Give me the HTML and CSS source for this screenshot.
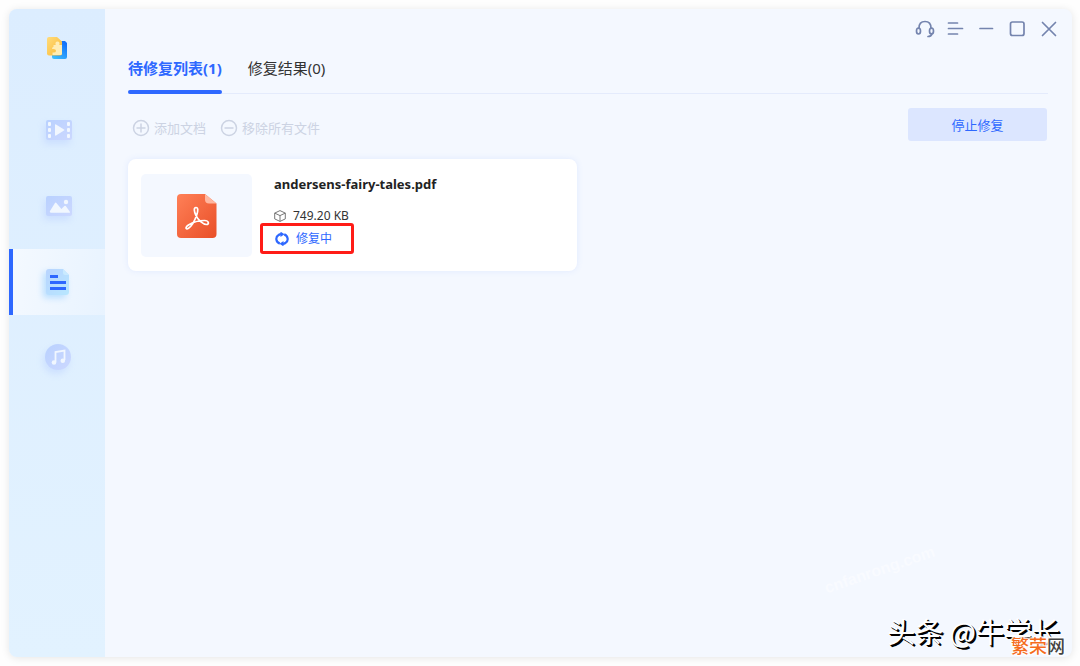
FILE: index.html
```html
<!DOCTYPE html>
<html lang="zh-CN">
<head>
<meta charset="utf-8">
<meta name="viewport" content="width=device-width, initial-scale=1">
<title>待修复列表</title>
<link rel="stylesheet" href="styles.css">
</head>
<body>
<div class="window">
  <nav class="sidebar" aria-label="功能">
    <div class="logo">
      <svg width="24" height="26" viewBox="0 0 24 26">
        <defs>
          <linearGradient id="logoBlue" x1="0" y1="1" x2=".6" y2="0"><stop offset="0" stop-color="#3fc4ff"/><stop offset="1" stop-color="#1473fa"/></linearGradient>
          <linearGradient id="logoGold" x1="0" y1="0" x2="1" y2="1"><stop offset="0" stop-color="#ffdc7c"/><stop offset="1" stop-color="#fab832"/></linearGradient>
        </defs>
        <path d="M9 5h11l2 2v14q0 2-2 2H9q-2 0-2-2V7q0-2 2-2z" fill="url(#logoBlue)"/>
        <path d="M4 1h8l5 4.500v12q0 2-2 2H4q-2 0-2-2V3q0-2 2-2z" fill="url(#logoGold)"/>
        <path d="M8.500 9h2.200q-1-3.500 1.800-3.500t1.800 3.500H17v8.500q0 1.500-1.500 1.500H7.500v-2.500q3.500.5 3.500-1.800t-4-1.700q0-2 1.500-2.200z" fill="#ffedb5"/>
      </svg>
    </div>
    <button class="nav-item" type="button" aria-label="视频修复">
      <svg class="nav-icon" width="28" height="28" viewBox="0 0 28 28">
        <defs><linearGradient id="soft" x1="0" y1="0" x2="1" y2="1"><stop offset="0" stop-color="#b9d1ff"/><stop offset="1" stop-color="#ccd8ff"/></linearGradient></defs>
        <rect x="1" y="4" width="26" height="20" rx="2" fill="url(#soft)"/>
        <g fill="#f1f7ff"><rect x="3" y="6" width="3" height="4" rx="1"/><rect x="3" y="12" width="3" height="4" rx="1"/><rect x="3" y="18" width="3" height="4" rx="1"/><rect x="22" y="6" width="3" height="4" rx="1"/><rect x="22" y="12" width="3" height="4" rx="1"/><rect x="22" y="18" width="3" height="4" rx="1"/><path d="M10 9q0-1 1-.5l8 5q1 .5 0 1l-8 5q-1 .5-1-.5z"/></g>
      </svg>
    </button>
    <button class="nav-item" type="button" aria-label="图片修复">
      <svg class="nav-icon" width="28" height="28" viewBox="0 0 28 28">
        <rect x="1" y="4" width="26" height="20" rx="2" fill="url(#soft)"/>
        <circle cx="21" cy="10" r="2.200" fill="#f1f7ff"/>
        <path d="M5 20q-.5 0 0-1l5-8q.7-1 1.400 0l5 6 3-3q.7-.6 1.400 0L25 20q.3.800-.5.800H5.500z" fill="#f1f7ff"/>
      </svg>
    </button>
    <button class="nav-item nav-item-active" type="button" aria-label="文档修复" aria-current="page">
      <svg class="nav-icon nav-icon-active" width="28" height="28" viewBox="0 0 28 28">
        <defs><linearGradient id="doc" x1="0" y1="0" x2="1" y2="1"><stop offset="0" stop-color="#b8d4ff"/><stop offset="1" stop-color="#b8e7ff"/></linearGradient></defs>
        <path d="M4 1h14l6 6v17q0 3-3 3H4q-3 0-3-3V4q0-3 3-3z" fill="url(#doc)"/>
        <path d="M18 1l6 6h-4q-2 0-2-2z" fill="#c9eaff"/>
        <path d="M5 8.500h8M5 14.500h16M5 20.500h16" stroke="#2e68ff" stroke-width="3"/>
      </svg>
    </button>
    <button class="nav-item" type="button" aria-label="音频修复">
      <svg class="nav-icon" width="28" height="28" viewBox="0 0 28 28">
        <circle cx="13" cy="13" r="13" fill="url(#soft)"/>
        <path d="M10.500 18V8l9-1.500V16" fill="none" stroke="#f1f7ff" stroke-width="1.800"/>
        <circle cx="9" cy="18.500" r="2.300" fill="#f1f7ff"/><circle cx="17.800" cy="16.800" r="2.300" fill="#f1f7ff"/>
      </svg>
    </button>
  </nav>

  <main class="main">
    <header class="titlebar">
      <button class="win-btn" type="button" aria-label="客服">
        <svg width="20" height="20" viewBox="0 0 20 20"><path d="M4 9.500V9q0-6.500 6-6.500T16 9v.5M17 14.500q-.5 3-4 3"/><ellipse cx="3.500" cy="12" rx="2" ry="3"/><ellipse cx="16.500" cy="12" rx="2" ry="3"/></svg>
      </button>
      <button class="win-btn" type="button" aria-label="菜单">
        <svg width="20" height="20" viewBox="0 0 20 20"><path d="M2.500 4h9M2.500 9.500h14M2.500 15h9"/></svg>
      </button>
      <button class="win-btn" type="button" aria-label="最小化">
        <svg width="20" height="20" viewBox="0 0 20 20"><path d="M3 9.500h12.500"/></svg>
      </button>
      <button class="win-btn" type="button" aria-label="最大化">
        <svg width="20" height="20" viewBox="0 0 20 20"><rect x="2.500" y="3" width="13.500" height="13.500" rx="2"/></svg>
      </button>
      <button class="win-btn" type="button" aria-label="关闭">
        <svg width="20" height="20" viewBox="0 0 20 20"><path d="M3.500 3.500l13 13m0-13l-13 13"/></svg>
      </button>
    </header>

    <div class="tabs" role="tablist">
      <button class="tab tab-active" type="button" role="tab" aria-selected="true">待修复列表(1)</button>
      <button class="tab" type="button" role="tab" aria-selected="false">修复结果(0)</button>
    </div>

    <div class="toolbar">
      <button class="tool" type="button" disabled>
        <svg width="18" height="18" viewBox="0 0 18 18"><circle cx="9" cy="9" r="7.500"/><path d="M4.500 9h9M9 4.500v9"/></svg>
        <span>添加文档</span>
      </button>
      <button class="tool" type="button" disabled>
        <svg width="18" height="18" viewBox="0 0 18 18"><circle cx="9" cy="9" r="7.500"/><path d="M4.500 9h9"/></svg>
        <span>移除所有文件</span>
      </button>
      <button class="stop" type="button">停止修复</button>
    </div>

    <section class="files">
      <article class="card">
        <div class="thumb">
          <svg width="40" height="44" viewBox="0 0 40 44">
            <defs><linearGradient id="pdf" x1="0" y1="0" x2="1" y2="1"><stop offset="0" stop-color="#ff8057"/><stop offset="1" stop-color="#e94f28"/></linearGradient></defs>
            <path d="M4 0h24l11.500 9.500V40q0 4-4 4H4q-4 0-4-4V4q0-4 4-4z" fill="url(#pdf)"/>
            <path d="M28 0l11.500 9.500H32q-4 0-4-4z" fill="#ffb7a0"/>
            <path d="M19 13.500c-2.500 0-2 4 0 8 2 4.500 7 9 10.500 9 3 0 2.500-4-2-4-6 0-12 2-16 4.500-4 2.700-2.500 4.800 0 3.300 2.800-1.800 6.500-8.300 8.300-13.500 1.300-4 1.500-7.300-.8-7.300z" fill="none" stroke="#fff" stroke-width="1.700"/>
          </svg>
        </div>
        <div class="info">
          <h2 class="name">andersens-fairy-tales.pdf</h2>
          <p class="meta">
            <svg width="12" height="12" viewBox="0 0 12 12"><path d="M6 .6l5.300 2.500v5.800L6 11.400.7 8.900V3.100zM.7 3.100L6 5.600l5.300-2.500M6 5.600v5.800"/></svg>
            <span>749.20 KB</span>
          </p>
          <p class="status">
            <svg width="14" height="14" viewBox="0 0 14 14"><path d="M4.800 11.600C.6 10 .2 4.800 3.600 3q1-.7 2.900-.8M9.200 2.400c4.200 1.600 4.600 6.800 1.200 8.600q-1 .7-2.900.8" fill="none" stroke="#2e68ff" stroke-width="2.200"/><path d="M5.500-.4l4 2.700-4 2.700zM8.500 14.400l-4-2.700 4-2.700z" fill="#2e68ff"/></svg>
            <span>修复中</span>
          </p>
        </div>
      </article>
    </section>
  </main>
</div>
<div class="mark-site">cnfanrong.com</div>
<div class="mark-author">头条 @牛学长</div>
<div class="mark-brand"><span class="mark-orange">繁荣</span>网</div>
</body>
</html>
```

FILE: styles.css
```css
* { box-sizing: border-box; }

body {
  margin: 0;
  min-height: 100vh;
  padding: 9px 8px 9px 9px;
  display: flex;
  position: relative;
  overflow: hidden;
  background: #fefefe;
  font-family: "Noto Sans", "Noto Sans CJK SC", sans-serif;
  font-size: 12px;
  color: #333;
}

button {
  border: 0;
  padding: 0;
  background: none;
  font: inherit;
  color: inherit;
}

h2, p { margin: 0; }

svg { display: block; flex: none; }

.window {
  flex: 1;
  display: flex;
  border-radius: 8px;
  overflow: hidden;
  background: #f4f8ff;
  box-shadow: 0 1px 9px rgba(0, 0, 0, .1);
}

.sidebar {
  width: 96px;
  flex: none;
  display: flex;
  flex-direction: column;
  gap: 10px;
  background: linear-gradient(#dcedff, #e2f2ff);
}

.logo {
  height: 78px;
  padding-top: 2px;
  display: flex;
  justify-content: center;
  align-items: center;
}

.nav-item {
  height: 66px;
  display: flex;
  justify-content: center;
  align-items: center;
  border-left: 4px solid transparent;
}

.nav-item-active {
  border-left-color: #2e68ff;
  background: linear-gradient(100deg, #f4f9ff, #e8f3ff) padding-box;
}

.nav-icon { filter: drop-shadow(-2px 4px 3px rgba(150, 180, 255, .25)); }

.nav-icon-active { filter: drop-shadow(-3px 3px 3px rgba(110, 190, 255, .4)); }

.main {
  flex: 1;
  min-width: 0;
  display: flex;
  flex-direction: column;
  padding: 10px 24px 24px 23px;
}

.titlebar {
  display: flex;
  justify-content: flex-end;
  gap: 11px;
  margin-right: -11px;
}

.win-btn svg {
  fill: none;
  stroke: #7484ae;
  stroke-width: 1.7;
  stroke-linecap: round;
}

.tabs {
  display: flex;
  gap: 26px;
  margin-top: 15px;
  border-bottom: 1px solid #e4ebfc;
  font-size: 15px;
  line-height: 26px;
}

.tab {
  height: 39px;
  padding-bottom: 12px;
  position: relative;
}

.tab-active {
  color: #2e68ff;
  font-weight: 700;
}

.tab-active::after {
  content: "";
  position: absolute;
  left: 0;
  right: 0;
  bottom: -1px;
  height: 4px;
  border-radius: 2px;
  background: #2e68ff;
}

.toolbar {
  display: flex;
  align-items: center;
  gap: 14px;
  margin-top: 14px;
  padding-left: 4px;
}

.tool {
  display: flex;
  align-items: center;
  gap: 4px;
  padding-top: 6px;
  font-size: 13px;
  line-height: 18px;
  color: #ccd3e3;
}

.tool svg {
  fill: none;
  stroke: #ccd3e3;
  stroke-width: 1.5;
}

.stop {
  width: 139px;
  height: 33px;
  margin-left: auto;
  margin-right: 1px;
  border-radius: 3px;
  background: #dce6ff;
  color: #2e68ff;
  font-size: 13px;
}

.files {
  display: grid;
  grid-template-columns: repeat(auto-fill, minmax(449px, 449px));
  margin-top: 18px;
}

.card {
  display: flex;
  gap: 22px;
  padding: 15px 13px 14px;
  border-radius: 8px;
  background: #fff;
  box-shadow: 0 0 6px rgba(90, 130, 255, .12);
}

.thumb {
  width: 111px;
  height: 83px;
  display: flex;
  justify-content: center;
  align-items: center;
  border-radius: 5px;
  background: #f4f8ff;
}

.name {
  font-size: 13px;
  line-height: 20px;
  font-weight: 700;
  color: #222;
}

.meta,
.status {
  display: flex;
  align-items: center;
  gap: 7px;
  line-height: 16px;
}

.meta { margin-top: 14px; }

.meta svg {
  fill: none;
  stroke: #777;
  stroke-width: 1;
}

.status {
  width: 94px;
  height: 31px;
  margin-top: -1px;
  margin-left: -14px;
  padding-left: 12px;
  border: 3px solid #ff1c17;
  border-radius: 3px;
  color: #2e68ff;
}

.mark-site,
.mark-author,
.mark-brand {
  position: absolute;
  white-space: nowrap;
}

.mark-site {
  right: 142px;
  bottom: 84px;
  font-family: "Liberation Sans", sans-serif;
  font-size: 16px;
  font-weight: 700;
  line-height: 24px;
  color: #f9fbff;
  transform: rotate(-19deg);
}

.mark-author {
  right: 20px;
  bottom: 15px;
  font-family: "Noto Sans CJK SC", sans-serif;
  font-size: 28px;
  line-height: 40px;
  color: #fff;
  text-shadow: 1px 1px 0 #000, 2px 2px 0 #000;
}

.mark-brand {
  right: 15px;
  bottom: 9px;
  font-family: "Noto Sans CJK SC", sans-serif;
  font-size: 18px;
  font-weight: 500;
  line-height: 24px;
  color: #444;
  text-shadow: 0 0 2px #fff, 1px 1px 1px #fff, -1px -1px 1px #fff, 1px -1px 1px #fff, -1px 1px 1px #fff;
}

.mark-orange { color: #f56b1c; }
```
